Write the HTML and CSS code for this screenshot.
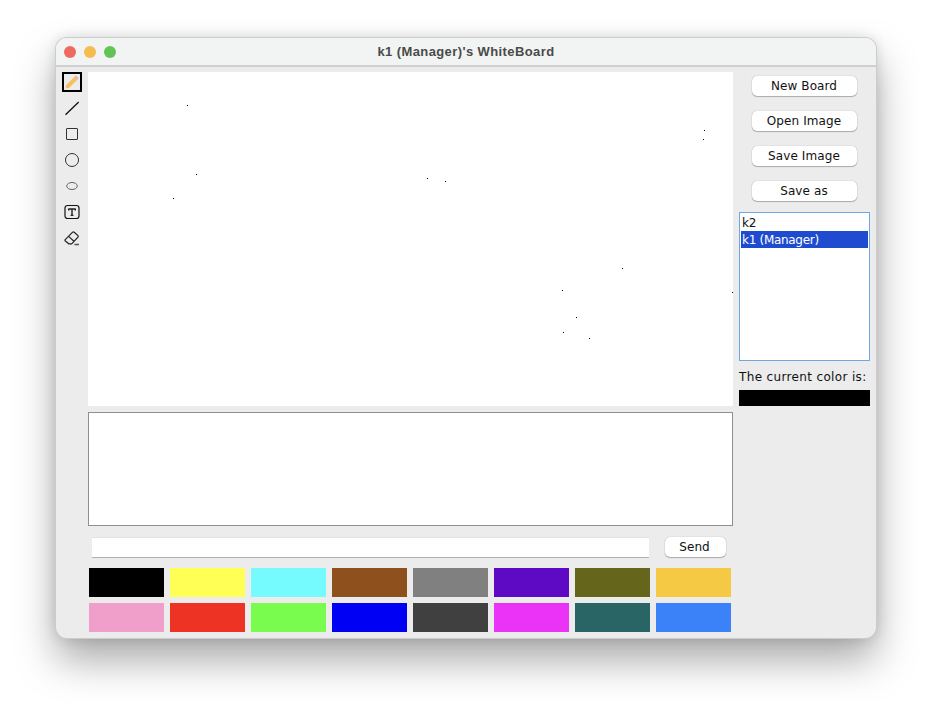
FILE: index.html
```html
<!DOCTYPE html>
<html lang="en">
<head>
<meta charset="UTF-8">
<meta name="viewport" content="width=device-width, initial-scale=1.0">
<title>k1 (Manager)'s WhiteBoard</title>
<link rel="stylesheet" href="styles.css">
</head>
<body>
<div class="window">
    <div class="titlebar">
        <div class="lights">
            <span class="light red"></span>
            <span class="light yellow"></span>
            <span class="light green"></span>
        </div>
        <div class="title">k1 (Manager)'s WhiteBoard</div>
    </div>
    <div class="content">
        <div class="tools">
            <div class="tool selected">
                <svg width="18" height="18" viewBox="0 0 18 18">
                    <path d="M1.8 16.2 L2.4 12.4 L11.8 3.2 L15 6.4 L5.6 15.7 Z" fill="#f3c25f"/>
                    <path d="M11.8 3.2 L13.4 1.7 L16.4 4.8 L15 6.4 Z" fill="#eba6bd"/>
                </svg>
            </div>
            <div class="tool">
                <svg width="18" height="18" viewBox="0 0 18 18"><path d="M2.5 15.7 L15.7 3" stroke="#111" stroke-width="1.3" fill="none"/></svg>
            </div>
            <div class="tool">
                <svg width="18" height="18" viewBox="0 0 18 18"><rect x="3.5" y="3.5" width="11" height="11" rx="0.5" stroke="#333" fill="none"/></svg>
            </div>
            <div class="tool">
                <svg width="18" height="18" viewBox="0 0 18 18"><circle cx="9" cy="9" r="6.5" stroke="#333" fill="none"/></svg>
            </div>
            <div class="tool">
                <svg width="18" height="18" viewBox="0 0 18 18"><ellipse cx="9" cy="9" rx="5.3" ry="3.5" stroke="#666" fill="none"/></svg>
            </div>
            <div class="tool">
                <svg width="18" height="18" viewBox="0 0 18 18">
                    <rect x="2" y="2.5" width="14" height="13" rx="2.5" stroke="#111" stroke-width="1.2" fill="none"/>
                    <path d="M5.7 6 H12.3 M5.7 7.6 V5.4 M12.3 7.6 V5.4 M9 6 V12.4 M7.6 12.4 H10.4" stroke="#222" stroke-width="1.4" fill="none"/>
                </svg>
            </div>
            <div class="tool">
                <svg width="18" height="18" viewBox="0 0 18 18">
                    <path d="M2 10.8 L9.6 3.2 Q10.4 2.6 11.2 3.2 L15 6.6 Q15.6 7.4 15 8.2 L8.6 14.8 H5.8 L2 11.6 Z" stroke="#222" stroke-width="1.2" fill="none"/>
                    <path d="M5.6 7.4 L11 12.2" stroke="#222" stroke-width="1.2"/>
                    <path d="M11.4 15.6 H16" stroke="#555" stroke-width="1.5"/>
                </svg>
            </div>
        </div>
        <div class="main">
            <div class="canvas">
                <i class="dot" style="left:99px;top:33px"></i>
                <i class="dot" style="left:616px;top:58px"></i>
                <i class="dot" style="left:615px;top:67px"></i>
                <i class="dot" style="left:108px;top:102px"></i>
                <i class="dot" style="left:339px;top:106px"></i>
                <i class="dot" style="left:357px;top:109px"></i>
                <i class="dot" style="left:85px;top:126px"></i>
                <i class="dot" style="left:534px;top:196px"></i>
                <i class="dot" style="left:474px;top:218px"></i>
                <i class="dot" style="left:644px;top:220px"></i>
                <i class="dot" style="left:488px;top:245px"></i>
                <i class="dot" style="left:475px;top:260px"></i>
                <i class="dot" style="left:501px;top:266px"></i>
            </div>
            <div class="chat"></div>
            <div class="send-row">
                <input type="text" class="chat-input">
                <button class="btn send">Send</button>
            </div>
            <div class="palette">
                <div class="swatch c-black"></div>
                <div class="swatch c-yellow"></div>
                <div class="swatch c-cyan"></div>
                <div class="swatch c-brown"></div>
                <div class="swatch c-gray"></div>
                <div class="swatch c-purple"></div>
                <div class="swatch c-olive"></div>
                <div class="swatch c-gold"></div>
                <div class="swatch c-pink"></div>
                <div class="swatch c-red"></div>
                <div class="swatch c-lime"></div>
                <div class="swatch c-blue"></div>
                <div class="swatch c-dark"></div>
                <div class="swatch c-magenta"></div>
                <div class="swatch c-teal"></div>
                <div class="swatch c-sky"></div>
            </div>
        </div>
        <div class="side">
            <div class="buttons">
                <button class="btn">New Board</button>
                <button class="btn">Open Image</button>
                <button class="btn">Save Image</button>
                <button class="btn">Save as</button>
            </div>
            <ul class="users">
                <li>k2</li>
                <li class="active">k1 (Manager)</li>
            </ul>
            <div class="color-label">The current color is:</div>
            <div class="current-color"></div>
        </div>
    </div>
</div>
</body>
</html>
```
FILE: styles.css
```css
body {
    margin: 0;
    padding: 38px 56px 0;
    height: 712px;
    box-sizing: border-box;
    overflow: hidden;
    background-color: #fff;
    font-family: "DejaVu Sans", sans-serif;
    font-size: 12px;
    color: #111;
}

.window {
    height: 600px;
    background-color: #ececec;
    border-radius: 11px;
    overflow: hidden;
    box-shadow: 0 0 0 1px #cccccc, 0 22px 40px rgba(0, 0, 0, 0.34), 0 0 14px rgba(0, 0, 0, 0.14);
}

.titlebar {
    height: 29px;
    position: relative;
    display: flex;
    align-items: center;
    justify-content: center;
    background-color: #f2f4f3;
    border-bottom: 2px solid #d0d0d0;
    box-sizing: border-box;
}

.lights {
    position: absolute;
    left: 8px;
    top: 8px;
    display: flex;
    gap: 8px;
}

.light {
    width: 12px;
    height: 12px;
    border-radius: 50%;
}

.red { background-color: #ee6a5f; }
.yellow { background-color: #f5bd4f; }
.green { background-color: #61c454; }

.title {
    font-family: "Liberation Sans", sans-serif;
    font-weight: bold;
    font-size: 13px;
    letter-spacing: 0.4px;
    color: #4a4a4a;
}

.content {
    display: flex;
}

.tools {
    width: 32px;
    padding-top: 5px;
    display: flex;
    flex-direction: column;
    align-items: center;
    gap: 6px;
}

.tool {
    width: 20px;
    height: 20px;
    display: flex;
    align-items: center;
    justify-content: center;
}

.tool.selected {
    box-sizing: border-box;
    border: 2px solid #000;
}

.main {
    width: 645px;
    padding-top: 5px;
}

.canvas {
    height: 334px;
    position: relative;
    background-color: #fff;
}

.dot {
    position: absolute;
    width: 1px;
    height: 1px;
    background-color: #000;
}

.chat {
    height: 112px;
    margin-top: 6px;
    background-color: #fff;
    border: 1px solid #8f8f8f;
}

.send-row {
    display: flex;
    align-items: flex-start;
    margin-top: 11px;
    padding-left: 4px;
}

.chat-input {
    width: 557px;
    height: 21px;
    box-sizing: border-box;
    padding: 0;
    background-color: #fff;
    border: none;
    border-top: 1px solid #e2e2e2;
    border-bottom: 1px solid #b0b0b0;
    outline: none;
}

.btn {
    height: 20px;
    padding: 0 1px 0 0;
    background-color: #fff;
    border: none;
    border-radius: 5px;
    box-shadow: 0 0 1px rgba(0, 0, 0, 0.35), 0 1px 1px rgba(0, 0, 0, 0.25);
    font-family: "DejaVu Sans", sans-serif;
    font-size: 12px;
    letter-spacing: 0.1px;
    color: #111;
}

.send {
    width: 61px;
    margin-left: 16px;
    padding-right: 2px;
}

.palette {
    display: grid;
    grid-template-columns: repeat(8, 75px);
    grid-auto-rows: 29px;
    column-gap: 6px;
    row-gap: 6px;
    margin-top: 10px;
    padding-left: 1px;
}

.swatch { height: 29px; }

.c-black { background-color: #000000; }
.c-yellow { background-color: #ffff55; }
.c-cyan { background-color: #75fbfd; }
.c-brown { background-color: #8e501c; }
.c-gray { background-color: #808080; }
.c-purple { background-color: #5e0ac5; }
.c-olive { background-color: #65651c; }
.c-gold { background-color: #f6c945; }
.c-pink { background-color: #f09fca; }
.c-red { background-color: #ed3323; }
.c-lime { background-color: #79fc4e; }
.c-blue { background-color: #0000f5; }
.c-dark { background-color: #404040; }
.c-magenta { background-color: #ea33f7; }
.c-teal { background-color: #2a6565; }
.c-sky { background-color: #3b82f8; }

.side {
    flex: 1;
    padding: 9px 6px 0;
}

.buttons {
    display: flex;
    flex-direction: column;
    align-items: center;
    gap: 15px;
}

.buttons .btn {
    width: 105px;
}

.users {
    list-style-type: none;
    height: 149px;
    box-sizing: border-box;
    margin: 11px 0 0;
    padding: 2px 1px;
    background-color: #fff;
    border: 1px solid #6ea6e6;
}

.users li {
    height: 17px;
    line-height: 17px;
    padding-left: 1px;
    letter-spacing: -0.3px;
}

.users li.active {
    margin-top: -1px;
    line-height: 19px;
    background-color: #1f4bd0;
    color: #fff;
}

.color-label {
    margin-top: 8px;
    line-height: 16px;
    letter-spacing: 0.35px;
    white-space: nowrap;
}

.current-color {
    height: 16px;
    margin-top: 5px;
    background-color: #000;
}
```
